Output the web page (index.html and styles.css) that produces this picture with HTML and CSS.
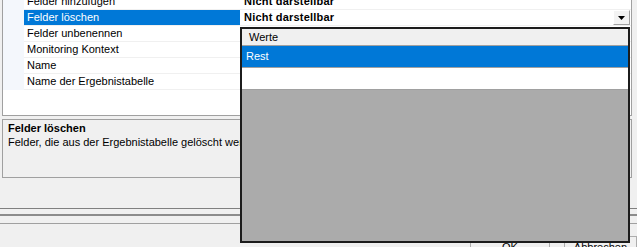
FILE: index.html
```html
<!DOCTYPE html>
<html lang="de">
    <head>
        <meta charset="UTF-8">
        <meta name="viewport" content="width=device-width, initial-scale=1.0">
        <title>Eigenschaften</title>
        <link rel="stylesheet" href="styles.css">
    </head>
    <body>
        <div class="window">
            <!-- Eigenschaftsraster -->
            <div class="grid">
                <div class="rows">
                    <div class="row">
                        <div class="margin"></div>
                        <div class="name">Felder hinzufügen</div>
                        <div class="value">Nicht darstellbar</div>
                    </div>
                    <div class="row selected">
                        <div class="margin"></div>
                        <div class="name">Felder löschen</div>
                        <div class="value">
                            <span>Nicht darstellbar</span>
                            <span class="drop-btn">
                                <svg width="7" height="4" viewBox="0 0 7 4"><polygon points="0,0 7,0 3.5,4" fill="#000"/></svg>
                            </span>
                        </div>
                    </div>
                    <div class="row">
                        <div class="margin"></div>
                        <div class="name">Felder unbenennen</div>
                        <div class="value"></div>
                    </div>
                    <div class="row">
                        <div class="margin"></div>
                        <div class="name">Monitoring Kontext</div>
                        <div class="value"></div>
                    </div>
                    <div class="row">
                        <div class="margin"></div>
                        <div class="name">Name</div>
                        <div class="value"></div>
                    </div>
                    <div class="row">
                        <div class="margin"></div>
                        <div class="name">Name der Ergebnistabelle</div>
                        <div class="value"></div>
                    </div>
                </div>
            </div>

            <!-- Beschreibung -->
            <div class="desc">
                <div class="desc-title">Felder löschen</div>
                <div class="desc-text">Felder, die aus der Ergebnistabelle gelöscht werden.</div>
            </div>

            <div class="lines">
                <div class="line-a"></div>
                <div class="line-b"></div>
                <div class="line-c"></div>
            </div>

            <div class="footer">
                <div class="button ok">OK</div>
                <div class="button cancel">Abbrechen</div>
            </div>

            <!-- Auswahlliste -->
            <div class="popup">
                <div class="popup-head">Werte</div>
                <div class="popup-row active">Rest</div>
                <div class="popup-row"></div>
            </div>
        </div>
    </body>
</html>
```

FILE: styles.css
```css
* {
    margin: 0;
    padding: 0;
    box-sizing: border-box;
}

body {
    font: 11px "Liberation Sans", Arial, sans-serif;
    color: #000;
    background-color: #f0f0f0;
}

.window {
    position: relative;
    width: 637px;
    height: 247px;
    overflow: hidden;
    background-color: #f0f0f0;
}

/* Eigenschaftsraster */
.grid {
    margin-left: 2px;
    width: 630px;
    height: 116px;
    background-color: #fff;
    border: 1px solid #a0a0a0;
    border-top: none;
    overflow: hidden;
}

.rows {
    margin-top: -6px;
}

.row {
    display: grid;
    grid-template-columns: 21px 216px 1fr;
    height: 16px;
}

.margin {
    background-color: #f4f7fc;
}

.name,
.value {
    line-height: 15px;
    border-bottom: 1px solid #f0f0f0;
    white-space: nowrap;
    overflow: hidden;
}

.name {
    padding-left: 3px;
}

.value {
    padding-left: 4px;
    font-weight: 700;
    letter-spacing: 0.2px;
    display: flex;
    align-items: flex-start;
    justify-content: space-between;
    padding-right: 1px;
}

.selected .name {
    background-color: #0078d7;
    color: #fff;
}

.drop-btn {
    display: flex;
    align-items: center;
    justify-content: center;
    width: 17px;
    height: 15px;
    background-color: #f3f3f3;
    border: 1px solid #fff;
    border-right-color: #a0a0a0;
    border-bottom-color: #a0a0a0;
}

/* Beschreibung */
.desc {
    margin: 3px 0 0 2px;
    width: 630px;
    height: 59px;
    border: 1px solid #a0a0a0;
    padding: 1px 5px 0;
    line-height: 14px;
    white-space: nowrap;
    overflow: hidden;
}

.desc-title {
    font-weight: 700;
}

.lines {
    margin-top: 30px;
}

.line-a {
    height: 1px;
    background-color: #808080;
}

.line-b {
    margin-top: 5px;
    height: 2px;
    background-color: #8c8c8c;
}

.line-c {
    margin-top: 7px;
    height: 1px;
    background-color: #a0a0a0;
}

.footer {
    display: flex;
    gap: 14px;
    padding: 12px 0 0 470px;
}

.button {
    height: 23px;
    border: 1px solid #adadad;
    background-color: #f0f0f0;
    text-align: center;
    line-height: 21px;
}

.ok {
    width: 82px;
}

.cancel {
    width: 75px;
}

/* Auswahlliste */
.popup {
    position: absolute;
    left: 240px;
    top: 27px;
    width: 390px;
    height: 216px;
    border: 2px solid #1c1c1c;
    background-color: #ababab;
    z-index: 2;
}

.popup-head {
    height: 17px;
    line-height: 15px;
    padding: 1px 0 0 7px;
    background-color: #f0f0f0;
    border-bottom: 1px solid #a0a0a0;
}

.popup-row {
    height: 22px;
    line-height: 21px;
    padding-left: 4px;
    background-color: #fff;
    border-bottom: 1px solid #a0a0a0;
}

.popup-row.active {
    background-color: #0078d7;
    color: #fff;
}
```
